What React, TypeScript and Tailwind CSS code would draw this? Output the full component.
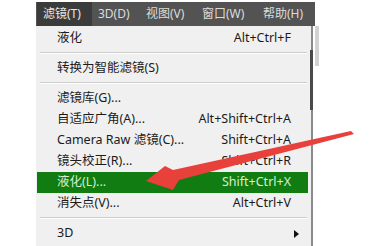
import React from 'react';

type Item =
  | { kind: 'sep' }
  | { kind: 'item'; label: string; shortcut?: string; active?: boolean; submenu?: boolean };

const MENU_BAR = [
  { label: '滤镜(T)', width: 'w-[55px]', active: true },
  { label: '3D(D)', width: 'w-[48px]' },
  { label: '视图(V)', width: 'w-[56px]' },
  { label: '窗口(W)', width: 'w-[61px]' },
  { label: '帮助(H)', width: 'flex-1' }
];

const ITEMS: Item[] = [
  { kind: 'item', label: '液化', shortcut: 'Alt+Ctrl+F' },
  { kind: 'sep' },
  { kind: 'item', label: '转换为智能滤镜(S)' },
  { kind: 'sep' },
  { kind: 'item', label: '滤镜库(G)...' },
  { kind: 'item', label: '自适应广角(A)...', shortcut: 'Alt+Shift+Ctrl+A' },
  { kind: 'item', label: 'Camera Raw 滤镜(C)...', shortcut: 'Shift+Ctrl+A' },
  { kind: 'item', label: '镜头校正(R)...', shortcut: 'Shift+Ctrl+R' },
  { kind: 'item', label: '液化(L)...', shortcut: 'Shift+Ctrl+X', active: true },
  { kind: 'item', label: '消失点(V)...', shortcut: 'Alt+Ctrl+V' },
  { kind: 'sep' },
  { kind: 'item', label: '3D', submenu: true }
];

const FONT = {
  fontFamily: '"Noto Sans", "Noto Sans CJK SC", sans-serif'
};

function MenuRow({ item }: { item: Extract<Item, { kind: 'item' }> }) {
  return (
    <div
      className={`flex h-[21px] items-center pl-[20px] pr-[17px] ${
        item.active ? 'bg-[#117c11] text-[#d4f0d0]' : 'text-[#1b1b1b]'
      }`}
    >
      <span className="flex-1 whitespace-nowrap">{item.label}</span>
      {item.shortcut && <span className="whitespace-nowrap">{item.shortcut}</span>}
      {item.submenu && (
        <svg width="5" height="8" viewBox="0 0 5 8" className="mr-[-8px]">
          <path d="M0 0 L5 4 L0 8 Z" fill="#111" />
        </svg>
      )}
    </div>
  );
}

export default function App() {
  return (
    <div className="relative h-[246px] w-[369px] overflow-hidden bg-white" style={FONT}>
      <div className="ml-[36px] mt-[2px] flex h-[24px] w-[279px] bg-[#535353] text-[12px] text-[#dcdcdc]">
        {MENU_BAR.map(m => (
          <div
            key={m.label}
            className={`flex items-center pl-[6px] ${m.width} ${
              m.active ? 'ml-[1px] bg-[#3b3b3b] text-[#e8e8e8]' : ''
            }`}
          >
            {m.label}
          </div>
        ))}
      </div>

      <div className="relative ml-[36px] h-[220px] w-[277px] border-r-2 border-[#8a8a8a] bg-[#f0f0f0] pl-[1px] pr-[3px] pt-[2px] text-[12.5px]">
        {ITEMS.map((item, i) =>
          item.kind === 'sep' ? (
            <div key={i} className="h-[9px] pl-[3px] pr-[1px] pt-[3px]">
              <div className="border-t border-[#cdcdcd] border-b-white border-b" />
            </div>
          ) : (
            <MenuRow key={i} item={item} />
          )
        )}
        <div className="absolute right-[-2px] top-[24px] h-[60px] w-[3px] bg-[#4a4a4a]" />
      </div>
      <div className="absolute left-[315px] top-[26px] h-[40px] w-[4px] bg-[#d2d2d2]" />

      <svg
        className="pointer-events-none absolute left-0 top-0"
        width="369"
        height="246"
        viewBox="0 0 369 246"
      >
        <path
          d="M146 181 L165 166 L173 170 L351 131 L354 134 L179 180 L173 190 Z"
          fill="#e8403a"
        />
      </svg>
    </div>
  );
}
